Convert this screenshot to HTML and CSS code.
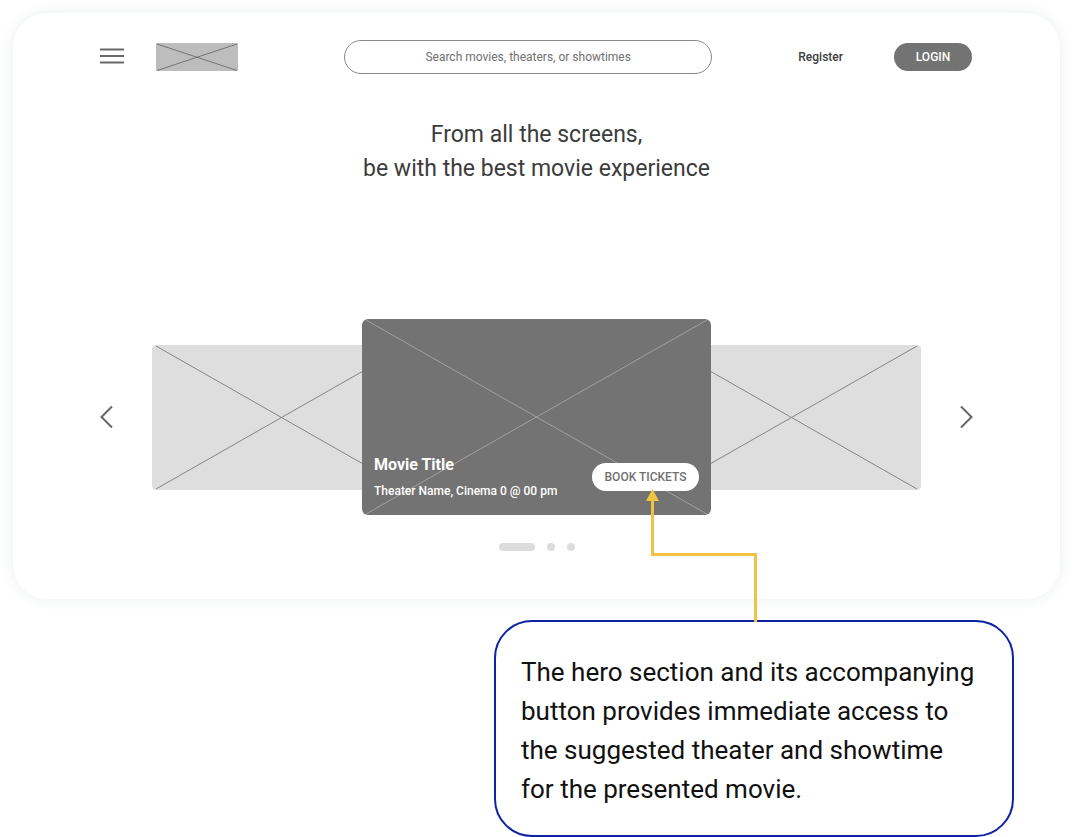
FILE: index.html
```html
<!DOCTYPE html>
<html lang="en">
<head>
<meta charset="utf-8">
<meta name="viewport" content="width=device-width, initial-scale=1">
<title>Movie booking wireframe</title>
<link rel="stylesheet" href="styles.css">
</head>
<body>
<main class="card">
  <header class="topbar">
    <button class="icon-button" type="button" aria-label="Menu">
      <svg width="24" height="18" viewBox="0 0 24 18"><path d="M0 1.500h24M0 8h24M0 14.500h24" stroke="#686868" stroke-width="2.1"/></svg>
    </button>
    <svg class="logo" width="82" height="28" viewBox="0 0 82 28" role="img" aria-label="Logo">
      <rect width="82" height="28" rx="1" fill="#bdbdbd"/>
      <path d="M1 1l80 26.500M1 27.500L81 1" stroke="#6c6c6c" stroke-width="0.9" fill="none"/>
    </svg>
    <input class="search" type="text" aria-label="Search" placeholder="Search movies, theaters, or showtimes">
    <a class="register" href="#register">Register</a>
    <button class="login" type="button">LOGIN</button>
  </header>

  <h1 class="headline">From all the screens,<br>be with the best movie experience</h1>

  <section class="carousel" aria-label="Featured movies">
    <button class="icon-button" type="button" aria-label="Previous">
      <svg width="13" height="24" viewBox="0 0 13 24"><path d="M12 1.500L1.500 12L12 22.500" fill="none" stroke="#666" stroke-width="2"/></svg>
    </button>
    <div class="slides">
      <div class="slide slide-left">
        <svg class="cross" viewBox="0 0 259 145" preserveAspectRatio="none"><path d="M4 1l251 143M4 144L255 1"/></svg>
      </div>
      <div class="slide slide-right">
        <svg class="cross" viewBox="0 0 259 145" preserveAspectRatio="none"><path d="M4 1l251 143M4 144L255 1"/></svg>
      </div>
      <article class="slide slide-main">
        <svg class="cross" viewBox="0 0 349 196" preserveAspectRatio="none"><path d="M4 1l341 194M4 195L345 1"/></svg>
        <div class="movie">
          <h2 class="movie-title">Movie Title</h2>
          <p class="movie-info">Theater Name, Cinema 0 @ 00 pm</p>
        </div>
        <button class="book" type="button">BOOK TICKETS</button>
      </article>
    </div>
    <button class="icon-button" type="button" aria-label="Next">
      <svg width="13" height="24" viewBox="0 0 13 24"><path d="M1 1.500L11.500 12L1 22.500" fill="none" stroke="#666" stroke-width="2"/></svg>
    </button>
  </section>

  <div class="dots">
    <span class="dot dot-active"></span>
    <span class="dot"></span>
    <span class="dot"></span>
  </div>
</main>

<aside class="callout">
  <svg class="connector" width="112" height="133" viewBox="0 0 112 133" aria-hidden="true">
    <path d="M6.500 10V65.500H109.500V133" fill="none" stroke="#efc443" stroke-width="3"/>
    <path d="M6.500 0L13 12H0z" fill="#efc443"/>
  </svg>
  <p class="callout-text">The hero section and its accompanying<br>button provides immediate access to<br>the suggested theater and showtime<br>for the presented movie.</p>
</aside>
</body>
</html>
```

FILE: styles.css
```css
* {
  box-sizing: border-box;
}

body {
  margin: 0;
  padding: 13px 13px 0;
  background: #fff;
  color: #3c3c3c;
  font-family: Roboto, "Liberation Sans", sans-serif;
}

h1,
h2,
p {
  margin: 0;
}

svg {
  display: block;
}

button {
  border: 0;
  padding: 0;
  font-family: inherit;
  cursor: pointer;
}

.card {
  padding: 27px 87px 48px;
  border-radius: 34px;
  background: #fff;
  box-shadow: 0 0 14px rgba(60, 90, 100, 0.1);
}

.topbar {
  display: flex;
  align-items: center;
}

.icon-button {
  flex: none;
  background: none;
}

.logo {
  flex: none;
  margin-left: 32px;
}

.search {
  flex: 1;
  min-width: 0;
  height: 34px;
  margin: 0 86px 0 106px;
  padding: 0 16px;
  border: 1px solid #8a8a8a;
  border-radius: 17px;
  background: #fff;
  font: 400 12px/16px Roboto, "Liberation Sans", sans-serif;
  text-align: center;
}

.search::placeholder {
  color: #707070;
  opacity: 1;
}

.register {
  color: #3c3c3c;
  font-size: 12px;
  font-weight: 500;
  text-decoration: none;
}

.login {
  width: 78px;
  height: 28px;
  margin: 0 1px 0 51px;
  border-radius: 14px;
  background: #737373;
  color: #fff;
  font-size: 12px;
  font-weight: 500;
}

.headline {
  margin-top: 44px;
  font-size: 23px;
  font-weight: 400;
  line-height: 34px;
  text-align: center;
}

.carousel {
  display: flex;
  align-items: center;
  gap: 39px;
  margin-top: 133px;
}

.slides {
  flex: 1;
  display: grid;
  grid-template-columns: 210fr 49fr 251fr 49fr 210fr;
  align-items: center;
}

.slide {
  position: relative;
  grid-row: 1;
  aspect-ratio: 259 / 145;
  border-radius: 4px;
  background: #dedede;
}

.slide-left {
  grid-column: 1 / 3;
}

.slide-right {
  grid-column: 4 / 6;
}

.slide-main {
  grid-column: 2 / 5;
  display: flex;
  align-items: flex-end;
  justify-content: space-between;
  aspect-ratio: 349 / 196;
  padding: 12px;
  border-radius: 6px;
  background: #737373;
  color: #fff;
}

.cross {
  position: absolute;
  inset: 0;
  width: 100%;
  height: 100%;
  fill: none;
  stroke: #858585;
  stroke-width: 1;
}

.slide-main .cross {
  stroke: #a0a0a0;
}

.movie,
.book {
  position: relative;
}

.movie-title {
  font-size: 16px;
  font-weight: 700;
  line-height: 24px;
}

.movie-info {
  margin-top: 6px;
  padding-bottom: 4px;
  font-size: 12px;
  font-weight: 500;
  line-height: 16px;
}

.book {
  width: 107px;
  height: 28px;
  margin-bottom: 12px;
  border-radius: 14px;
  background: #fff;
  color: #707070;
  font-size: 12px;
  font-weight: 500;
}

.dots {
  display: flex;
  justify-content: center;
  gap: 12px;
  margin-top: 28px;
}

.dot {
  width: 8px;
  height: 8px;
  border-radius: 4px;
  background: #dcdcdc;
}

.dot-active {
  width: 36px;
}

.callout {
  position: relative;
  width: 520px;
  max-width: 100%;
  margin: 21px 46px 0 auto;
  padding: 31px 20px 26px 25px;
  border: 2px solid #0d22a4;
  border-radius: 38px;
  background: #fff;
}

.callout-text {
  color: #111;
  font-size: 26px;
  line-height: 39px;
}

.connector {
  position: absolute;
  left: 150px;
  bottom: 100%;
}
```
